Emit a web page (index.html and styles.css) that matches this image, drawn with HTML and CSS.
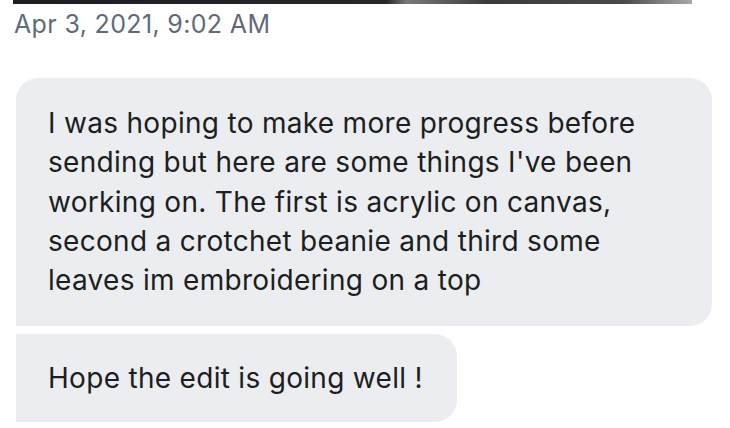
FILE: index.html
```html
<!DOCTYPE html>
<html lang="en">
<head>
<meta charset="utf-8">
<title>Messages</title>
<link rel="stylesheet" href="styles.css">
</head>
<body>
<div class="photo-edge"></div>
<div class="thread">
  <div class="timestamp">Apr 3, 2021, 9:02 AM</div>
  <div class="group">
    <div class="bubble first">I was hoping to make more progress before<br>sending but here are some things I've been<br>working on. The first is acrylic on canvas,<br>second a crotchet beanie and third some<br>leaves im embroidering on a top</div>
    <div class="bubble last">Hope the edit is going well !</div>
  </div>
</div>
</body>
</html>
```
FILE: styles.css
```css
html, body {
  margin: 0;
  padding: 0;
  background: #ffffff;
}
body {
  width: 730px;
  height: 428px;
  overflow: hidden;
  font-family: Inter, "Liberation Sans", sans-serif;
}
.photo-edge {
  margin-left: 13px;
  width: 679px;
  height: 4px;
  background: linear-gradient(90deg, #1d1d22 0%, #26262b 55%, #7a7a7e 58%, #3a3a3e 70%, #4a4a4e 90%, #a9a9ac 100%);
}
.thread {
  padding-left: 16px;
}
.timestamp {
  margin-top: 5px;
  margin-left: -2px;
  font-size: 25px;
  line-height: 30px;
  letter-spacing: 0.35px;
  color: #5f6b7a;
}
.group {
  margin-top: 39px;
  display: flex;
  flex-direction: column;
  align-items: flex-start;
  gap: 8px;
}
.bubble {
  background: #ebedf0;
  color: #1c1e21;
  font-size: 28px;
  line-height: 39.3px;
  letter-spacing: 0.3px;
  padding: 25px 32px;
  box-sizing: border-box;
}
.first {
  width: 696px;
  padding-top: 26px;
  padding-bottom: 25.5px;
  border-radius: 22px 22px 22px 0;
}
.last {
  border-radius: 0 22px 22px 0;
  padding-top: 25px;
  padding-bottom: 23.7px;
  padding-right: 34px;
}
```
